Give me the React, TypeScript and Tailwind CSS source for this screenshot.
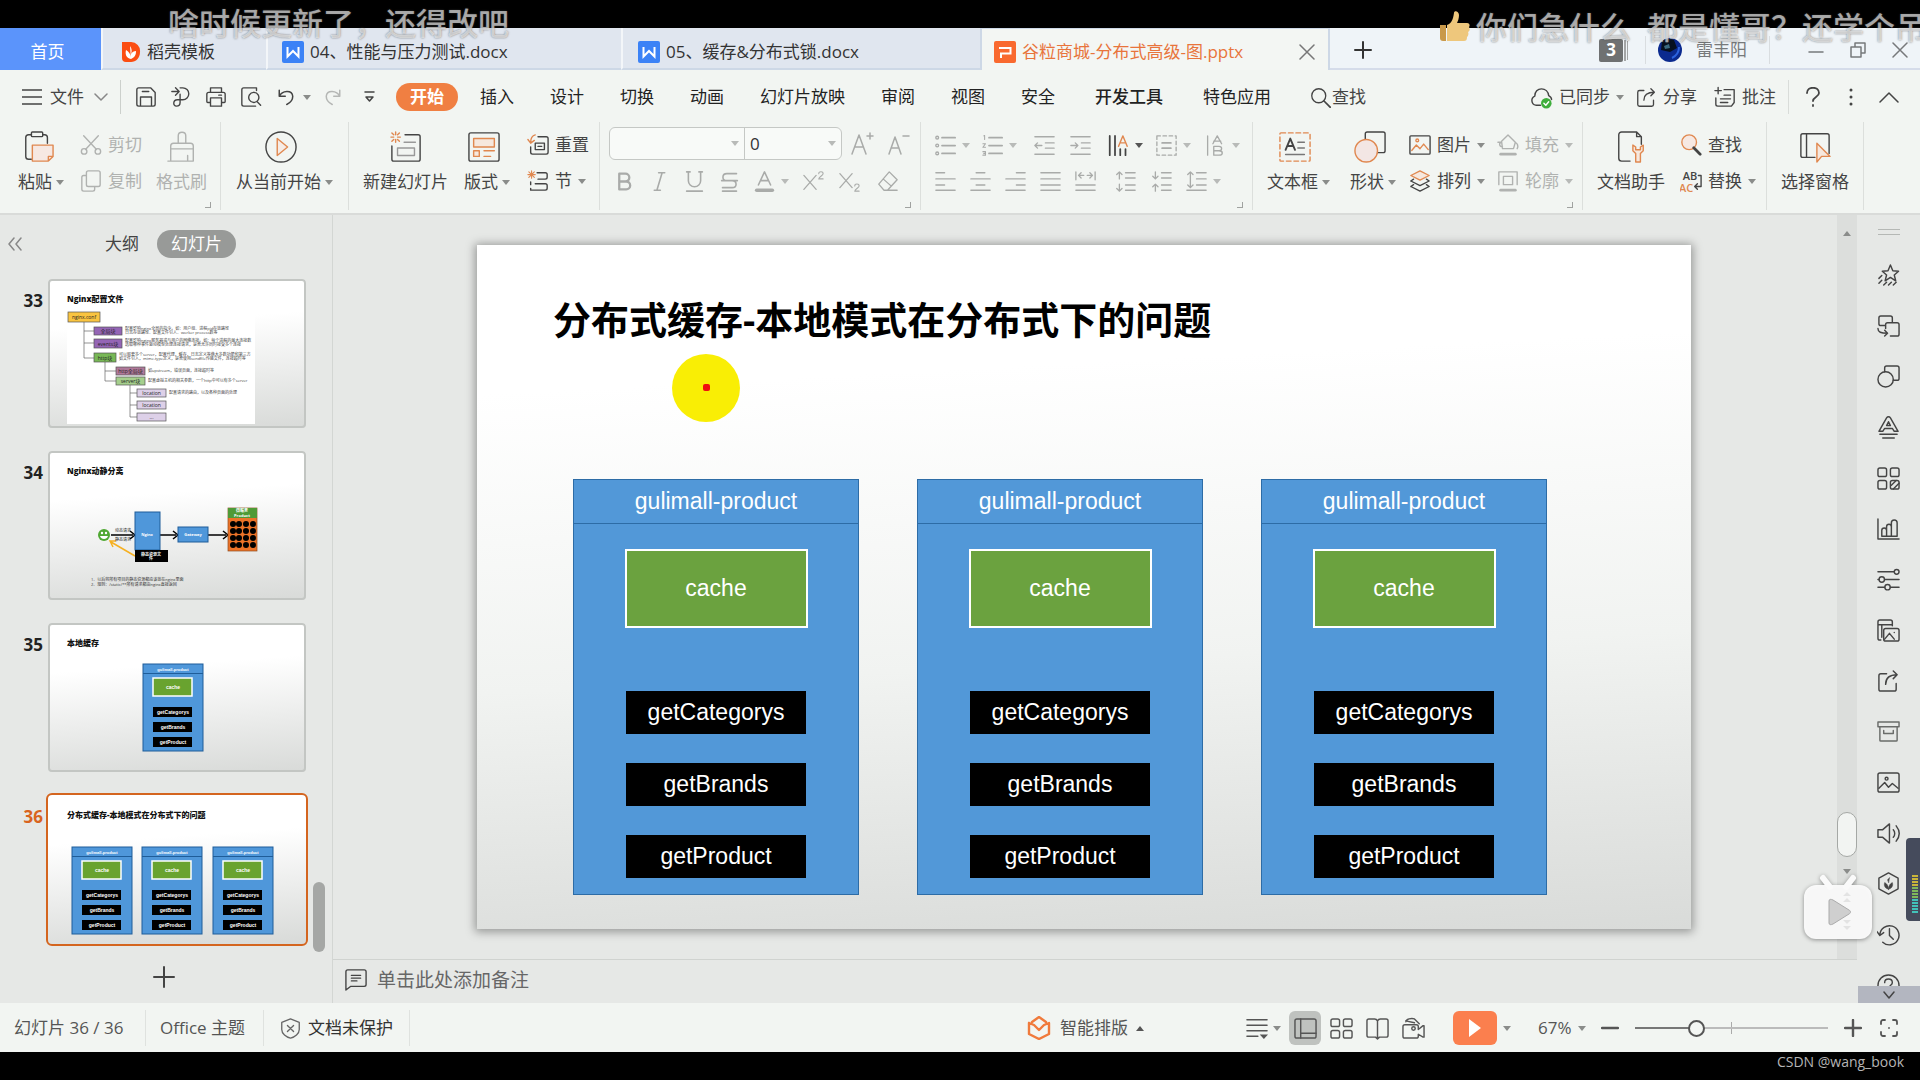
import type { ReactNode } from 'react';
import clsx from 'clsx';

type IconProps = { children: ReactNode; className?: string; box?: string };

function Icon({ children, className = 'size-6', box = '0 0 24 24' }: IconProps) {
  return (
    <svg
      viewBox={box}
      className={clsx('shrink-0', className)}
      fill="none"
      stroke="currentColor"
      strokeWidth="1.5"
      strokeLinecap="round"
      strokeLinejoin="round"
      aria-hidden="true"
    >
      {children}
    </svg>
  );
}

function Caret({ className = 'text-[#8a8c8a]', up = false }: { className?: string; up?: boolean }) {
  return (
    <svg viewBox="0 0 8 5" className={clsx('h-[5px] w-2 shrink-0', className)} aria-hidden="true">
      <path d={up ? 'M0 5h8L4 0z' : 'M0 0h8L4 5z'} fill="currentColor" />
    </svg>
  );
}

const ORANGE = '#e08850';

/* ---------- title bar ---------- */

function DocIcon({ letter }: { letter: 'W' | 'P' }) {
  return (
    <svg viewBox="0 0 22 22" className="size-[22px] shrink-0" fill="none" aria-hidden="true">
      <rect width="22" height="22" rx="2" fill={letter === 'W' ? '#3b82f6' : '#f9692f'} />
      {letter === 'W' ? (
        <path d="M5.500 6v9.500L11 10l5.500 5.500V6" stroke="#fff" strokeWidth="2" />
      ) : (
        <path d="M5 7h11.500v5.500H7V17" stroke="#fff" strokeWidth="2" />
      )}
    </svg>
  );
}

function DocTab({ children, className }: { children: ReactNode; className: string }) {
  return (
    <button
      className={clsx(
        'flex min-w-0 items-center gap-[6px] border-b-2 border-l-2 border-b-[#cdd8e6] border-l-[#f3f6f9] bg-[#e0e6ef] pt-[7px] whitespace-nowrap text-[#333]',
        className,
      )}
    >
      {children}
    </button>
  );
}

function TabBar() {
  return (
    <div className="flex h-[42px] shrink-0 bg-[#eff4f8]">
      <button className="w-[101px] bg-[#5b94fb] pt-[6px] pr-[6px] text-white">首页</button>
      <DocTab className="w-[165px] pl-[18px]">
        <svg viewBox="0 0 20 22" className="h-[22px] w-5" fill="none" aria-hidden="true">
          <path d="M1 1h9a9 9 0 0 1 9 10c0 6-4 10-9 10H5a4 4 0 0 1-4-4z" fill="#fb4d12" />
          <path d="M10 18C5 17 4 13 5 9c3 2 5 4 5 9zm0 0c4-2 5-4 5-8-2 0-4 1-5 3 1-3 1-5-1-8" fill="#fff" />
        </svg>
        稻壳模板
      </DocTab>
      <DocTab className="w-[355px] pl-[14px]">
        <DocIcon letter="W" />
        04、性能与压力测试.docx
      </DocTab>
      <DocTab className="w-[359px] pl-[15px]">
        <DocIcon letter="W" />
        05、缓存&amp;分布式锁.docx
      </DocTab>
      <div className="flex w-[350px] items-center border-x-2 border-t border-[#cdd8e6] bg-[#f3f6f3] pt-[4px] pl-3 text-[#e8743b]">
        <button className="flex flex-1 items-center gap-[6px] whitespace-nowrap">
          <DocIcon letter="P" />
          谷粒商城-分布式高级-图.pptx
        </button>
        <button aria-label="关闭标签" className="mr-[13px] text-[#777]">
          <Icon className="size-4" box="0 0 16 16">
            <path d="M1 1l14 14M15 1L1 15" />
          </Icon>
        </button>
      </div>
      <div className="flex flex-1 items-center border-b-2 border-[#d5dcea] pt-1">
        <button aria-label="新建" className="ml-6 text-[#333]">
          <Icon className="size-[18px]" box="0 0 18 18">
            <path d="M9 1v16M1 9h16" strokeWidth="2" />
          </Icon>
        </button>
        <span className="ml-auto flex items-center">
          <span className="flex h-[23px] w-6 items-center justify-center rounded-xs bg-[#6f7172] font-bold text-white">3</span>
          <span className="ml-px h-[21px] w-[2px] bg-[#a3a5a6]" />
          <span className="ml-px h-[19px] w-px bg-[#a3a5a6]" />
        </span>
        <span className="ml-[17px] h-7 w-px bg-[#d9dde0]" />
        <button className="ml-3 flex items-center gap-[14px] text-[#77797b]">
          <svg viewBox="0 0 24 24" className="size-6" aria-hidden="true">
            <circle cx="12" cy="12" r="12" fill="#0b2a8f" />
            <path d="M4 3a12 12 0 0 1 12-1l3 8-7 4-9-2z" fill="#06101f" />
            <path d="M6 8l5-2 1 4-5 1z" fill="#3a6a80" />
            <path d="M14 20c4-2 7-6 7-11" stroke="#2b62dd" strokeWidth="2" fill="none" />
          </svg>
          雷丰阳
        </button>
        <span className="ml-[22px] h-7 w-px bg-[#d9dde0]" />
        <div className="mr-3 ml-[38px] flex gap-[26px] text-[#77797b]">
          {[
            ['最小化', 'M1 10h14'],
            ['还原', 'M1 5h10v10H1zM5 5V1h10v10h-4'],
            ['关闭', 'M1 1l14 14M15 1L1 15'],
          ].map(([label, d]) => (
            <button key={label} aria-label={label}>
              <Icon className="size-4" box="0 0 16 16">
                <path d={d} />
              </Icon>
            </button>
          ))}
        </div>
      </div>
    </div>
  );
}

/* ---------- menu row ---------- */

const quickIcons: { label: string; art: ReactNode }[] = [
  { label: '保存', art: <path d="M2 4a2 2 0 0 1 2-2h13l5 5v13a2 2 0 0 1-2 2H4a2 2 0 0 1-2-2zM6 22V12h12v10M8 6h7" /> },
  { label: '输出', art: <path d="M2 6h7M6 2l4 4-4 4M11 2h3a6.500 6.500 0 0 1 0 13H8c-5 0-5 7-1 7 3 0 4-2 4-4V9" /> },
  { label: '打印', art: <path d="M6 7V2h12v5M6 18H3a1 1 0 0 1-1-1V9a2 2 0 0 1 2-2h16a2 2 0 0 1 2 2v8a1 1 0 0 1-1 1h-3M6 13h12v9H6zM15 10h3" /> },
  { label: '打印预览', art: <path d="M9 22H4a2 2 0 0 1-2-2V4a2 2 0 0 1 2-2h14v3M15 7a5.500 5.500 0 1 0 .1 0M18.500 17l4 4M9 22h8" /> },
];

const menus = ['插入', '设计', '切换', '动画', '幻灯片放映', '审阅', '视图', '安全', '开发工具', '特色应用'];

function MenuRow() {
  return (
    <div className="flex h-[52px] shrink-0 items-center pt-[2px] pl-[22px] whitespace-nowrap">
      <button className="flex items-center gap-2">
        <Icon className="h-[18px] w-5" box="0 0 20 18">
          <path d="M0 2h20M0 9h20M0 16h20" />
        </Icon>
        文件
        <Icon className="ml-[2px] h-2 w-[14px] text-[#888]" box="0 0 14 8">
          <path d="M1 1l6 6 6-6" />
        </Icon>
      </button>
      <span className="ml-3 h-[34px] w-px bg-[#ccd0cc]" />
      <div className="ml-[14px] flex items-center gap-[13px]">
        {quickIcons.map(({ label, art }) => (
          <button key={label} aria-label={label}>
            <Icon className="size-[22px]">{art}</Icon>
          </button>
        ))}
        <button aria-label="撤销" className="ml-[2px] flex items-center gap-2">
          <Icon className="size-[18px]">
            <path d="M3 3v8h8M3 11C7 3 20 2 21 11c0 5-4 9-8 11" strokeWidth="2" />
          </Icon>
          <Caret />
        </button>
        <button aria-label="恢复" className="text-[#b5b7b5]">
          <Icon className="size-[18px]">
            <path d="M21 3v8h-8M21 11C17 3 4 2 3 11c0 5 4 9 8 11" strokeWidth="2" />
          </Icon>
        </button>
        <button aria-label="自定义" className="ml-[9px]">
          <Icon className="h-[12px] w-[11px]" box="0 0 11 12">
            <path d="M1 1h9M2 6l3.500 4L9 6z" />
          </Icon>
        </button>
      </div>
      <button className="ml-[21px] h-7 w-[62px] rounded-full bg-[#f07f42] font-bold text-white">开始</button>
      <nav className="ml-[22px] flex gap-9">
        {menus.map((m) => (
          <button key={m} className={clsx(m === '开发工具' && 'px-1 font-medium', 'text-[#222]')}>
            {m}
          </button>
        ))}
      </nav>
      <button className="ml-[39px] flex items-center gap-px">
        <Icon className="size-[21px]">
          <circle cx="10" cy="10" r="8" />
          <path d="M16 16l7 7" strokeWidth="2" />
        </Icon>
        查找
      </button>
      <div className="mr-[21px] ml-auto flex items-center">
        <button className="flex items-center gap-[6px]">
          <Icon className="size-[23px]">
            <path d="M11 20H6a5 5 0 0 1-1-9.500C5 6 8 3 12 3s7 3 7.500 7c2 1 3 2 3 4" />
            <circle cx="17" cy="18" r="5.500" fill="#3fae3c" stroke="none" />
            <path d="M14.500 18l2 2 3-3.500" stroke="#fff" />
          </Icon>
          已同步
          <Caret />
        </button>
        <button className="ml-3 flex items-center gap-[6px]">
          <Icon className="size-[21px]">
            <path d="M9 4H4a2 2 0 0 0-2 2v14a2 2 0 0 0 2 2h14a2 2 0 0 0 2-2v-5M9 15c0-6 3-9 12-9M17 2l4 4-4 4" />
          </Icon>
          分享
        </button>
        <button className="ml-[17px] flex items-center gap-[6px]">
          <Icon className="size-[22px]">
            <path d="M11 4h11v14l-3 4H4a2 2 0 0 1-2-2v-7M1 5h7M4.500 1.500v7M11 10h7M7 14h11M7 18h8" />
          </Icon>
          批注
        </button>
        <span className="ml-3 h-[34px] w-px bg-[#d9dcd9]" />
        <div className="ml-[17px] flex items-center gap-[24px]">
          <button aria-label="帮助" className="mr-[3px]">
            <Icon className="h-5 w-[14px]" box="0 0 14 20">
              <path d="M1 6c0-7 12-7 12 0 0 4-6 4-6 8M7 18v1" strokeWidth="1.800" />
            </Icon>
          </button>
          <button aria-label="更多">
            <Icon className="h-[18px] w-2" box="0 0 8 18">
              <path d="M4 2v.1M4 9v.1M4 16v.1" strokeWidth="3" />
            </Icon>
          </button>
          <button aria-label="收起功能区">
            <Icon className="h-3 w-5" box="0 0 20 12">
              <path d="M1 11l9-9 9 9" />
            </Icon>
          </button>
        </div>
      </div>
    </div>
  );
}

/* ---------- ribbon ---------- */

function Group({ children, className, corner = false }: { children: ReactNode; className?: string; corner?: boolean }) {
  return (
    <div className={clsx('relative flex h-[88px] shrink-0 items-start border-r border-[#dcdfdc]', className)}>
      {children}
      {corner && <span className="absolute right-[9px] bottom-[2px] size-[6px] border-r border-b border-[#a0a2a0]" />}
    </div>
  );
}

function BigButton({ icon, label, caret = false, muted = false, className }: { icon: ReactNode; label: string; caret?: boolean; muted?: boolean; className?: string }) {
  return (
    <button className={clsx('mt-[9px] flex flex-col items-center gap-[6px]', muted && 'text-[#b0b2b0]', className)}>
      <Icon className={clsx('size-8', caret && 'mr-[7px]')} box="0 0 34 34">
        {icon}
      </Icon>
      <span className="flex h-[26px] items-center gap-1 whitespace-nowrap">
        {label}
        {caret && <Caret />}
      </span>
    </button>
  );
}

function SmallButton({ icon, label, caret = false, muted = false }: { icon: ReactNode; label: string; caret?: boolean; muted?: boolean }) {
  return (
    <button className={clsx('flex h-[26px] items-center gap-[6px] whitespace-nowrap', muted && 'text-[#b0b2b0]')}>
      <Icon className="size-[22px]">{icon}</Icon>
      {label}
      {caret && <Caret className={muted ? 'text-[#b8bab8]' : 'text-[#8a8c8a]'} />}
    </button>
  );
}

function Stack({ children, className }: { children: ReactNode; className?: string }) {
  return <div className={clsx('mt-[10px] flex flex-col gap-[10px]', className)}>{children}</div>;
}

// every tool carries its own width: those with a caret take more room
type Tool = { label: string; art: ReactNode; caret?: boolean; width: string; dark?: boolean };

function ToolRow({ tools }: { tools: Tool[] }) {
  return (
    <div className="flex h-[26px] text-[#a9aba9]">
      {tools.map(({ label, art, caret, width, dark }) => (
        <button key={label} aria-label={label} className={clsx('flex items-center gap-[6px]', width, dark && 'text-[#444]')}>
          <Icon className="size-[21px]">{art}</Icon>
          {caret && <Caret className={dark ? 'text-[#555]' : 'text-[#b8bab8]'} />}
        </button>
      ))}
    </div>
  );
}

const glyph = { fill: 'currentColor', stroke: 'none' };

const fontTools: Tool[] = [
  { label: '加粗', width: 'w-[35px]', art: <path d="M6 3h7a4.500 4.500 0 0 1 0 9H6zM6 12h8a4.500 4.500 0 0 1 0 9H6z" strokeWidth="2.600" /> },
  { label: '倾斜', width: 'w-[35px]', art: <path d="M11 2h7M6 22h7M15 2L9 22" strokeWidth="1.800" /> },
  { label: '下划线', width: 'w-[35px]', art: <path d="M5 1v10a7 7 0 0 0 14 0V1M3 23h18M3 1h4M17 1h4" strokeWidth="1.800" /> },
  { label: '删除线', width: 'w-[35px]', art: <path d="M20 3H9c-6 0-6 8 0 8h6c6 0 6 8 0 8H4M3 11h18M4 23h16" strokeWidth="1.800" /> },
  { label: '字体颜色', width: 'w-[49px]', caret: true, art: <><path d="M5 16l7-15 7 15M8 11h8" strokeWidth="1.800" /><path d="M3 22h18" strokeWidth="4" /></> },
  { label: '上标', width: 'w-[36px]', art: <><path d="M1 5l14 16M15 5L1 21" /><path d="M18 3c0-3 5-3 5 0 0 2-5 4-5 6h5" strokeWidth="1.200" /></> },
  { label: '下标', width: 'w-[38px]', art: <><path d="M1 3l14 16M15 3L1 19" /><path d="M18 17c0-3 5-3 5 0 0 2-5 4-5 6h5" strokeWidth="1.200" /></> },
  { label: '清除格式', width: 'w-6', art: <path d="M14 1l9 9-11 12H8l-6-7zM7 9l9 8M8 22h15" /> },
];

const listTools: Tool[] = [
  { label: '项目符号', width: 'w-[47px]', caret: true, art: <><path d="M8 3h15M8 12h15M8 21h15" strokeWidth="2" /><circle cx="2.500" cy="3" r="1.600" /><circle cx="2.500" cy="12" r="1.600" /><circle cx="2.500" cy="21" r="1.600" /></> },
  { label: '编号', width: 'w-[52px]', caret: true, art: <><path d="M8 3h15M8 12h15M8 21h15" strokeWidth="2" /><path d="M2 1l1-.5V5M1 10h3l-3 4h3M1 19h3v4H1M2 21h2" strokeWidth="1.200" /></> },
  { label: '减少缩进', width: 'w-9', art: <path d="M1 2h22M13 9h10M13 15h10M1 22h22M9 12H1M4 9l-3 3 3 3" /> },
  { label: '增加缩进', width: 'w-[38px]', art: <path d="M1 2h22M13 9h10M13 15h10M1 22h22M1 12h8M6 9l3 3-3 3" /> },
  { label: '文字方向', width: 'w-12', caret: true, dark: true, art: <><path d="M2 1v22M8 1v22M14 16v7M20 16v7" strokeWidth="2" /><path d="M12 13l5-12 5 12M14 9h6" stroke={ORANGE} /></> },
  { label: '对齐文本', width: 'w-[49px]', caret: true, art: <><rect x="1" y="1" width="22" height="22" strokeDasharray="4 3" /><path d="M7 9h10M7 15h10" strokeWidth="2" /></> },
  { label: '转换', width: 'w-10', caret: true, art: <path d="M3 1v22M9 10l5-9 5 9M10 7h8M10 13h6c4 0 4 5 0 5h-6zM10 18h6c5 0 5 5 0 5h-6z" /> },
];

const alignTools: Tool[] = [
  { label: '左对齐', width: 'w-[35px]', art: <path d="M1 2h10M1 9h22M1 16h10M1 22h22" /> },
  { label: '居中', width: 'w-[35px]', art: <path d="M7 2h10M1 9h22M7 16h10M1 22h22" /> },
  { label: '右对齐', width: 'w-[35px]', art: <path d="M13 2h10M1 9h22M13 16h10M1 22h22" /> },
  { label: '两端对齐', width: 'w-[35px]', art: <path d="M1 2h22M1 9h22M1 16h22M1 22h22" /> },
  { label: '分散对齐', width: 'w-10', art: <path d="M1 1v9M23 1v9M4 5h6M14 5h6M7 2L4 5l3 3M17 2l3 3-3 3M1 16h22M1 22h22" /> },
  { label: '增大段距', width: 'w-9', art: <path d="M12 2h11M12 8h11M12 16h11M12 22h11M5 9V1M2 4l3-3 3 3M5 15v8M2 20l3 3 3-3" /> },
  { label: '减小段距', width: 'w-[35px]', art: <path d="M12 2h11M12 8h11M12 16h11M12 22h11M5 1v8M2 6l3 3 3-3M5 23v-8M2 18l3-3 3 3" /> },
  { label: '行距', width: 'w-10', caret: true, art: <path d="M12 2h11M12 9h11M12 16h11M1 22h22M5 1v18M2 4l3-3 3 3M2 16l3 3 3-3" /> },
];

function Ribbon() {
  return (
    <div className="flex h-[93px] shrink-0 border-b-2 border-[#d9dbd9]">
      <Group className="w-[221px] pl-[18px]" corner>
        <BigButton
          caret
          label="粘贴"
          icon={
            <>
              <path d="M10 4H7a3 3 0 0 0-3 3v20a3 3 0 0 0 3 3h3M22 4h2a3 3 0 0 1 3 3v6" />
              <rect x="10" y="1" width="12" height="5" rx="1" />
              <path d="M11 15h22v12l-5 5H11zM28 32v-5h5" stroke={ORANGE} fill="#f6e8e2" />
            </>
          }
        />
        <Stack className="ml-4">
          <SmallButton muted label="剪切" icon={<><path d="M4 2l14 15M20 2L6 17" /><circle cx="4.500" cy="19" r="3" /><circle cx="19.500" cy="19" r="3" /></>} />
          <SmallButton muted label="复制" icon={<path d="M9 1h11a2 2 0 0 1 2 2v13a2 2 0 0 1-2 2H9a2 2 0 0 1-2-2V3a2 2 0 0 1 2-2zM7 6H4a2 2 0 0 0-2 2v13a2 2 0 0 0 2 2h10a2 2 0 0 0 2-2v-3" />} />
        </Stack>
        <BigButton
          muted
          label="格式刷"
          className="ml-[14px]"
          icon={<path d="M13 13V5c0-5 8-5 8 0v8M5 19v-3a3 3 0 0 1 3-3h18a3 3 0 0 1 3 3v3zM5 19v13h24V19M23 26v6M2 32h3" />}
        />
      </Group>
      <Group className="w-[128px] pl-[15px]">
        <BigButton
          caret
          label="从当前开始"
          icon={
            <>
              <circle cx="17" cy="17" r="16" />
              <path d="M13 8v18l11-9z" stroke={ORANGE} fill="#f6ece6" />
            </>
          }
        />
      </Group>
      <Group className="w-[251px] pl-[14px]">
        <BigButton
          label="新建幻灯片"
          icon={
            <>
              <path d="M16 4h14a2 2 0 0 1 2 2v24a2 2 0 0 1-2 2H4a2 2 0 0 1-2-2V16" />
              <path d="M15 12h12M8 18h18v8H8z" stroke="#999" />
              <path d="M6 1v3M6 9v3M1 6.500h3M8 6.500h3M2 2l2 2M8 9l2 2M10 2L8 4M4 9l-2 2" stroke={ORANGE} />
            </>
          }
        />
        <BigButton
          caret
          label="版式"
          className="ml-4"
          icon={
            <>
              <rect x="1" y="2" width="32" height="30" rx="2" />
              <path d="M6 8h22v9H6zM6 21h6v6H6zM17 21h11M17 27h7" stroke={ORANGE} fill="#f6e8de" />
            </>
          }
        />
        <Stack className="ml-[17px]">
          <SmallButton label="重置" icon={<><path d="M12 3h9a2 2 0 0 1 2 2v15a2 2 0 0 1-2 2H6a2 2 0 0 1-2-2v-6M9 10h10v7H9zM12 13.500h4" /><path d="M9 1C5 2 4 5 4 9M1 6l3 4 4-3" stroke={ORANGE} /></>} />
          <SmallButton caret label="节" icon={<><path d="M11 3h9a2 2 0 0 1 2 2v3a2 2 0 0 1-2 2h-8M4 13v3M4 20v2h16a2 2 0 0 0 2-2v-3a2 2 0 0 0-2-2H9" /><path d="M5 1v8M1 5h8M2 2l6 6M8 2L2 8" stroke={ORANGE} strokeWidth="1.200" /></>} />
        </Stack>
      </Group>
      <Group className="w-[321px] pl-[9px]" corner>
        <div className="mt-[5px] flex flex-col gap-[8px]">
          <div className="flex items-center text-[#a9aba9]">
            <div className="flex h-[33px] overflow-hidden rounded-md border border-[#c5c8c5] bg-[#f8faf8]">
              <div className="relative w-[135px] border-r border-[#c5c8c5]">
                <select aria-label="字体" className="size-full appearance-none" />
                <span className="pointer-events-none absolute top-[13px] right-[5px] flex"><Caret className="text-[#b8bab8]" /></span>
              </div>
              <div className="relative w-24 text-[#333]">
                <select aria-label="字号" className="size-full appearance-none pl-[5px]">
                  <option>0</option>
                </select>
                <span className="pointer-events-none absolute top-[13px] right-[5px] flex"><Caret className="text-[#b8bab8]" /></span>
              </div>
            </div>
            <button aria-label="增大字号" className="ml-[8px]">
              <Icon className="size-6"><path d="M2 22L9 3l7 19M5 15h8M17 4h6M20 1v6" /></Icon>
            </button>
            <button aria-label="减小字号" className="ml-3">
              <Icon className="size-6"><path d="M3 22L9 5l6 17M5 16h8M17 4h6" /></Icon>
            </button>
          </div>
          <div className="ml-[5px]">
            <ToolRow tools={fontTools} />
          </div>
        </div>
      </Group>
      <Group className="w-[332px] pl-[14px]" corner>
        <Stack>
          <ToolRow tools={listTools} />
          <ToolRow tools={alignTools} />
        </Stack>
      </Group>
      <Group className="w-[330px] pl-[14px]" corner>
        <BigButton
          caret
          label="文本框"
          icon={
            <>
              <rect x="1" y="2" width="32" height="30" rx="1" stroke={ORANGE} strokeDasharray="5 3" />
              <path d="M7 20l5-12 5 12M9 16h6" strokeWidth="2" />
              <path d="M20 12h7M20 18h7M7 25h20" stroke="#777" />
            </>
          }
        />
        <BigButton
          caret
          label="形状"
          className="ml-5"
          icon={
            <>
              <rect x="12" y="1" width="21" height="22" rx="2" />
              <circle cx="13" cy="21" r="12" stroke={ORANGE} fill="#f3e6e4" />
            </>
          }
        />
        <Stack className="ml-[13px]">
          <SmallButton caret label="图片" icon={<><rect x="1" y="2" width="22" height="20" rx="1" /><path d="M3 18l5-6 4 4 4-5 5 6" stroke={ORANGE} /><circle cx="9" cy="7" r="1.500" stroke={ORANGE} /></>} />
          <SmallButton caret label="排列" icon={<><path d="M12 1l10 5-10 5L2 6z" stroke={ORANGE} fill="#f6e8de" /><path d="M2 12l10 5 10-5-3-2M2 12l3-2M2 18l10 5 10-5-3-2M2 18l3-2" /></>} />
        </Stack>
        <Stack className="ml-3">
          <SmallButton muted caret label="填充" icon={<><path d="M5 8l7-7 8 8-2 7H6zM1 9h4c-3 0-3 5 1 5M20 9c3 2 3 5 2 7" /><path d="M4 22h16" strokeWidth="3" /></>} />
          <SmallButton muted caret label="轮廓" icon={<><path d="M2 16V2h20v14M7 16V7h10v9z" /><path d="M4 22h16" strokeWidth="3" /></>} />
        </Stack>
      </Group>
      <Group className="w-[184px] pl-[14px]">
        <BigButton
          label="文档助手"
          icon={
            <>
              <path d="M16 32H7a3 3 0 0 1-3-3V4a3 3 0 0 1 3-3h16l5 5v8M23 1v5h5" />
              <path d="M19 15v6l3 3v9h5v-9l3-3v-6l-3 2v3h-5v-3z" stroke={ORANGE} fill="#f6e8de" />
            </>
          }
        />
        <Stack className="ml-[15px]">
          <SmallButton label="查找" icon={<><circle cx="10" cy="9" r="8" stroke={ORANGE} fill="#f6e8e2" /><path d="M15 15l7 7" strokeWidth="3" /></>} />
          <SmallButton
            caret
            label="替换"
            icon={
              <>
                <text x="3" y="11" fontSize="12" fontWeight="600" {...glyph}>AB</text>
                <text x="-1" y="24" fontSize="12" fontWeight="600" fill={ORANGE} stroke="none">AC</text>
                <path d="M20 6h3v12h-6M19 15l-3 3 3 3" />
              </>
            }
          />
        </Stack>
      </Group>
      <Group className="w-[97px] pl-[14px]">
        <BigButton
          label="选择窗格"
          icon={
            <>
              <path d="M17 28H4a2 2 0 0 1-2-2V5a2 2 0 0 1 2-2h26a2 2 0 0 1 2 2v19M8 3v25" />
              <path d="M19 13v20l5-6h9z" stroke={ORANGE} fill="#f6e8de" />
            </>
          }
        />
      </Group>
    </div>
  );
}

/* ---------- slide thumbnails ---------- */

const methods = ['getCategorys', 'getBrands', 'getProduct'];

function MiniService({ x, y }: { x: number; y: number }) {
  return (
    <g transform={`translate(${x} ${y})`} fill="#fff" fontSize="5" fontFamily="Liberation Sans" fontWeight="bold" textAnchor="middle">
      <rect width="60" height="87" fill="#4f97da" stroke="#1f5d99" />
      <path d="M0 9.500h60" stroke="#1f5d99" />
      <text x="30" y="7" fontSize="4">gulimall-product</text>
      <rect x="10" y="14" width="39" height="18" fill="#69a32f" stroke="#fff" strokeWidth="1.500" />
      <text x="30" y="25">cache</text>
      {methods.map((m, i) => (
        <g key={m}>
          <rect x="10" y={43 + i * 15} width="39" height="10" fill="#000" />
          <text x="30" y={50 + i * 15}>{m}</text>
        </g>
      ))}
    </g>
  );
}

const confNodes = [
  { x: 20, y: 33, w: 32, h: 10, fill: '#f9c440', text: 'nginx.conf' },
  { x: 46, y: 48, w: 28, h: 8, fill: '#9465b5', text: '全局块', note: ['配置影响nginx全局的指令。如：用户组、进程pid存放路径', '日志存放路径、配置文件引入、worker process数等'] },
  { x: 46, y: 60, w: 28, h: 9, fill: '#9465b5', text: 'events块', note: ['配置影响nginx服务器或与用户的网络连接。如：每个进程的最大连接数', '选取哪种事件驱动模型处理连接请求，是否允许同时接受多个连接'] },
  { x: 46, y: 74, w: 22, h: 9, fill: '#78b856', text: 'http块', note: ['可以嵌套多个server，配置代理，缓存，日志定义等绝大多数功能和第三方', '如文件引入，mime-type定义，是否使用sendfile传输文件，连接超时等'] },
  { x: 68, y: 88, w: 29, h: 8, fill: '#b0799a', text: 'http全局块', note: ['如upstream，错误页面，连接超时等'] },
  { x: 68, y: 98, w: 29, h: 8, fill: '#a5cf8c', text: 'server块', note: ['配置虚拟主机的相关参数，一个http中可以有多个server'] },
  { x: 89, y: 110, w: 29, h: 8, fill: '#ddd0e8', text: 'location', note: ['配置请求的路由，以及各种页面的处理'] },
  { x: 89, y: 122, w: 29, h: 8, fill: '#ddd0e8', text: 'location' },
  { x: 89, y: 134, w: 29, h: 8, fill: '#ddd0e8', text: '...' },
];

function NginxConf() {
  return (
    <>
      <rect x="19" y="26" width="188" height="119" fill="#fff" />
      <path d="M36 43v36h10M36 52h10M36 64h10M57 83v19h11M57 92h11M82 106v32h7M82 114h7M82 126h7" stroke="#666" fill="none" strokeWidth=".7" />
      {confNodes.map((n) => (
        <g key={n.y} fontSize="5">
          <rect x={n.x} y={n.y} width={n.w} height={n.h} fill={n.fill} stroke="#555" strokeWidth=".7" />
          <text x={n.x + n.w / 2} y={n.y + n.h / 2 + 2} textAnchor="middle" fill="#222">{n.text}</text>
          {n.note?.map((line, i) => (
            <text key={line} x={n.x + n.w + 3} y={n.y + 5 - (n.note.length - 1) * 2 + i * 4} fontSize="4" fill="#444">{line}</text>
          ))}
        </g>
      ))}
    </>
  );
}

function StaticSplit() {
  return (
    <>
      <circle cx="56" cy="84" r="6" fill="#4fa832" />
      <circle cx="54" cy="82" r="1.200" fill="#fff" />
      <circle cx="58" cy="82" r="1.200" fill="#fff" />
      <path d="M52 85c1 4 7 4 8 0z" fill="#fff" />
      <path d="M63 84h22M112 84h16M160 84h18" stroke="#000" strokeWidth="1.500" />
      <path d="M82 80l5 4-5 4M125 80l5 4-5 4M175 80l5 4-5 4" stroke="#000" fill="none" strokeWidth="1.500" />
      <path d="M87 105L63 91M68 90l-6 0 3 6" stroke="#f5b022" fill="none" strokeWidth="1.500" />
      <rect x="87" y="61" width="25" height="38" fill="#4f97da" stroke="#1f5d99" />
      <rect x="87" y="99" width="33" height="12" fill="#000" />
      <rect x="130" y="76" width="30" height="15" fill="#4f97da" stroke="#1f5d99" />
      <rect x="180" y="57" width="29" height="43" fill="#ec7328" stroke="#8f4a1d" strokeWidth=".7" />
      <rect x="180" y="57" width="29" height="10" fill="#4f9a36" />
      {[73, 80, 87, 94].map((y) => [185, 191, 198, 205].map((x) => <circle key={`${x}-${y}`} cx={x} cy={y} r="3" fill="#000" />))}
      <g fontSize="4" textAnchor="middle" fill="#fff" fontWeight="bold">
        <text x="99" y="85">Nginx</text>
        <text x="145" y="85">Gateway</text>
        <text x="103" y="105">静态资源文</text>
        <text x="103" y="109">件</text>
        <text x="194" y="61">微服务</text>
        <text x="194" y="66">Product</text>
        <text x="75" y="81" fill="#222" fontWeight="normal">动态请求</text>
        <text x="75" y="90" fill="#222" fontWeight="normal">静态请求</text>
      </g>
      <g fontSize="4" fill="#333">
        <text x="43" y="130">1、以后将所有项目的静态资源都应该放在nginx里面</text>
        <text x="43" y="135">2、规则：/static/**所有请求都由nginx直接返回</text>
      </g>
    </>
  );
}

const thumbs = [
  { no: 33, title: 'Nginx配置文件', art: <NginxConf /> },
  { no: 34, title: 'Nginx动静分离', art: <StaticSplit /> },
  { no: 35, title: '本地缓存', art: <MiniService x={95} y={41} /> },
  {
    no: 36,
    title: '分布式缓存-本地模式在分布式下的问题',
    art: (
      <>
        <MiniService x={24} y={52} />
        <MiniService x={94} y={52} />
        <MiniService x={165} y={52} />
      </>
    ),
    active: true,
  },
];

function SlidePane() {
  return (
    <aside className="relative w-[333px] shrink-0 border-r border-[#d3d6d3]">
      <div className="flex h-[58px] items-center pl-2">
        <button aria-label="收起" className="text-[#888]">
          <Icon className="size-[14px]" box="0 0 14 14"><path d="M6 1L1 7l5 6M13 1L8 7l5 6" /></Icon>
        </button>
        <button className="ml-[83px]">大纲</button>
        <button className="ml-[18px] h-7 w-[79px] rounded-full bg-[#989a98] text-white">幻灯片</button>
      </div>
      <ol className="mt-[6px] flex flex-col gap-[23px]">
        {thumbs.map((t) => (
          <li key={t.no} className="flex">
            <span className={clsx('w-[43px] pt-[10px] text-right font-bold', t.active ? 'text-[#d9641e]' : 'text-[#222]')}>{t.no}</span>
            <button
              aria-label={`幻灯片 ${t.no}`}
              className={clsx(
                'ml-[5px] h-[149px] w-[258px] rounded-sm bg-linear-[176deg] from-white from-30% to-[#d8dad8] outline-2',
                t.active ? 'outline-[#d4651f]' : '-outline-offset-2 outline-[#c3c6c3]',
              )}
            >
              <svg viewBox="0 0 258 149" className="size-full">
                <text x="19" y="23" fontSize="8" fontWeight="900" fill="#111">{t.title}</text>
                {t.art}
              </svg>
            </button>
          </li>
        ))}
      </ol>
      <button aria-label="新建幻灯片" className="mt-[22px] ml-[153px] block">
        <Icon className="size-[22px]" box="0 0 22 22"><path d="M11 1v20M1 11h20" strokeWidth="2" /></Icon>
      </button>
      <span className="absolute right-[7px] bottom-[51px] h-[70px] w-3 rounded-full bg-[#a5a7a5]" />
    </aside>
  );
}

/* ---------- slide ---------- */

function Service() {
  return (
    <div className="flex flex-col items-center border border-[#2d6ca6] bg-[#5298d8] pb-4">
      <div className="flex h-11 w-full items-center justify-center border-b border-[#2d6ca6]">gulimall-product</div>
      <div className="mt-[25px] flex h-[79px] w-[183px] items-center justify-center border-2 border-white bg-[#6ba23f]">cache</div>
      <div className="mt-[63px] flex flex-col gap-[29px]">
        {methods.map((m) => (
          <div key={m} className="flex h-[43px] w-[180px] items-center justify-center bg-black">{m}</div>
        ))}
      </div>
    </div>
  );
}

function Slide() {
  return (
    <div className="relative mr-[146px] ml-36 aspect-[1215/685] flex-1 bg-linear-[177deg] from-white from-20% via-[#f1f3f1] via-60% to-[#d9dbd9] shadow-[0_1px_9px_2px_rgba(0,0,0,0.35)]">
      <h1 className="pt-[54px] pl-[76px] text-[38px] leading-10 font-bold text-black">分布式缓存-本地模式在分布式下的问题</h1>
      <div className="mt-[140px] mr-36 ml-24 grid grid-cols-3 gap-[58px] font-['Liberation_Sans',sans-serif] text-[23px] text-white">
        <Service />
        <Service />
        <Service />
      </div>
      {/* laser pointer */}
      <span className="absolute top-[109px] left-[195px] flex size-[68px] items-center justify-center rounded-full bg-[#f9ee05]">
        <span className="size-[7px] rounded-xs bg-[#f01010]" />
      </span>
    </div>
  );
}

/* ---------- right side ---------- */

const sideIcons: { label: string; art: ReactNode }[] = [
  { label: '动画', art: <path d="M14 1l2.500 6 6 .5-4.500 4 1.500 6L14 14l-5.500 3.500 1.500-6-4.500-4 6-.5zM5 12l-3 3M5 17l-3 3M10 19l-3 3M15 19l-3 3M20 19l-3 3" /> },
  { label: '切换', art: <path d="M9 11H4a2 2 0 0 1-2-2V3a2 2 0 0 1 2-2h10a2 2 0 0 1 2 2v4M11 8h10a2 2 0 0 1 2 2v10a2 2 0 0 1-2 2h-7M9 14v-4a2 2 0 0 1 2-2M1 14c0 4 3 5 10 5M8 16l3 3-3 3" /> },
  { label: '形状', art: <><path d="M8 7V3a2 2 0 0 1 2-2h11a2 2 0 0 1 2 2v11a2 2 0 0 1-2 2h-4" /><circle cx="9" cy="15" r="8" /></> },
  { label: '艺术字', art: <path d="M2 16L10 2c1-1.500 3-1.500 4 0l8 14h-4l-2-3H8l-2 3zM10 10l2-4 2 4zM3 19h18M6 23h12" /> },
  { label: '模板', art: <><rect x="1" y="1" width="9" height="9" rx="2" /><rect x="14" y="1" width="9" height="9" rx="2" /><rect x="1" y="14" width="9" height="9" rx="2" /><rect x="14" y="14" width="9" height="9" rx="2" /><path d="M15 19l5-5M17 23l6-6" /></> },
  { label: '图表', art: <path d="M1 1v21h22M5 19v-6a2 2 0 0 1 5 0v6M10 19V9a2 2 0 0 1 5 0v10M15 19V5a3 3 0 0 1 6 0v14zM5 19h10" /> },
  { label: '设置', art: <><path d="M1 4h17M1 12h1M8 12h15M1 20h7M14 20h9" /><circle cx="20.500" cy="4" r="2.500" /><circle cx="5" cy="12" r="2.800" /><circle cx="11" cy="20" r="2.800" /></> },
  { label: '素材', art: <><path d="M4 22H3a2 2 0 0 1-2-2V3a2 2 0 0 1 2-2h11a2 2 0 0 1 2 2v4M1 6h15M5 6v13" /><rect x="7" y="10" width="16" height="13" rx="2" /><path d="M8 21l5-6 5 6M18 14v.1" /></> },
  { label: '分享', art: <path d="M10 4H4a2 2 0 0 0-2 2v14a2 2 0 0 0 2 2h14a2 2 0 0 0 2-2v-6M9 15c0-6 3-10 12-10M17 1l4 4-4 4" /> },
  { label: '归档', art: <path d="M1 2h22v5H1zM3 7v14a1 1 0 0 0 1 1h16a1 1 0 0 0 1-1V7M7 11v3h10v-3" stroke="#6a6c6a" /> },
  { label: '图片', art: <><rect x="1" y="2" width="22" height="20" rx="2" /><path d="M2 18l6-6 4 5 4-4 6 5" /><circle cx="10" cy="8" r="1.500" /></> },
  { label: '音频', art: <path d="M1 8h5l7-6v20l-7-6H1zM17 8c2 2 2 6 0 8M20 4c4 5 4 11 0 16" /> },
  { label: '资源', art: <><path d="M12 1l10 5.500v11L12 23 2 17.500v-11z" /><path d="M12 18c-4-1-5-4-4-7 2 1 4 3 4 7zm0 0c4-1 5-4 4-7-2 1-4 3-4 7zM12 11l-1-3 2-2z" fill="currentColor" strokeWidth=".5" /></> },
  { label: '历史', art: <path d="M3 12a10 10 0 1 1 3 8M0 9l3 4 4-3M13 6v7l4 4" /> },
  { label: '帮助', art: <><circle cx="12" cy="12" r="11" /><path d="M8 9c0-5 8-5 8 0 0 3-4 3-4 6M12 18v.5" /></> },
];

function SideBar() {
  return (
    <aside className="relative flex w-[63px] shrink-0 flex-col items-center overflow-hidden pt-[14px] pb-[6px]">
      <span className="mb-[29px] h-[6px] w-[22px] shrink-0 border-y border-[#b5b8b5]" />
      <div className="flex min-h-0 flex-1 flex-col justify-between">
        {sideIcons.map(({ label, art }) => (
          <button key={label} aria-label={label}>
            <Icon className="size-[23px]">{art}</Icon>
          </button>
        ))}
      </div>
      <button aria-label="向下滚动" className="absolute right-0 bottom-0 flex h-[17px] w-[62px] items-center justify-center bg-[#b3b6c0]">
        <Icon className="h-2 w-3" box="0 0 12 8"><path d="M1 1l5 6 5-6" /></Icon>
      </button>
      {/* volume meter */}
      <span className="absolute right-0 bottom-[82px] flex h-[83px] w-[14px] items-end rounded-l bg-[#454b5c] py-2 pl-[6px]">
        <svg viewBox="0 0 6 38" className="h-[38px] w-[6px]" aria-hidden="true">
          {Array.from({ length: 13 }, (_, i) => (
            <rect key={i} y={i * 3} width="6" height="2" fill={i < 4 ? '#c9b53a' : i < 8 ? '#7fb95a' : '#42c3b9'} />
          ))}
        </svg>
      </span>
    </aside>
  );
}

function PlayBadge() {
  return (
    <svg viewBox="0 0 72 68" className="absolute right-[46px] bottom-[62px] z-10 h-[68px] w-[72px] drop-shadow-[0_1px_2px_rgba(0,0,0,0.4)]" aria-hidden="true">
      <path d="M21 5l7 9M51 5l-7 9" stroke="#fafafa" strokeWidth="6" strokeLinecap="round" />
      <rect x="2" y="12" width="68" height="54" rx="12" fill="#fafafa" fillOpacity=".97" />
      <path d="M27 28c0-2 2-2 4-1l16 10c2 1 2 3 0 4L31 51c-2 1-4 1-4-1z" fill="#cfcfcf" stroke="#aaa" />
      <path d="M41 23l4-4 4 4zM41 29l4-4 4 4zM41 47l4 4 4-4zM41 53l4 4 4-4z" fill="#e3e3e3" />
    </svg>
  );
}

function Workspace() {
  return (
    <div className="relative flex min-h-0 flex-1 bg-[#e6e8e6]">
      <SlidePane />
      <main className="flex min-w-0 flex-1 flex-col">
        <div className="flex min-h-0 flex-1">
          <div className="flex flex-1 items-center">
            <Slide />
          </div>
          <div className="flex w-5 flex-col items-center bg-[#dcdedc] pt-4">
            <Caret up />
            <span className="mt-auto h-[45px] w-5 rounded-full border border-[#a5a8a5] bg-[#f2f4f2]" />
            <span className="mt-[12px] mb-[85px] flex"><Caret /></span>
          </div>
        </div>
        <label className="flex h-11 items-center border-t border-[#d0d3d0] pb-1 pl-[11px]">
          <Icon className="h-[22px] w-6">
            <path d="M3 1h18a2 2 0 0 1 2 2v14a2 2 0 0 1-2 2H6l-5 4V3a2 2 0 0 1 2-2zM7 7h10M7 10h10M7 13h6" />
          </Icon>
          <input
            aria-label="备注"
            placeholder="单击此处添加备注"
            className="ml-[9px] w-96 bg-transparent text-[19px] outline-none placeholder:text-[#666]"
          />
        </label>
      </main>
      <SideBar />
      <PlayBadge />
    </div>
  );
}

/* ---------- status bar ---------- */

const viewIcons: { label: string; art: ReactNode }[] = [
  { label: '普通视图', art: <><rect x="1" y="2" width="22" height="20" rx="2" /><path d="M7 2v20M7 17h16" /></> },
  { label: '幻灯片浏览', art: <><rect x="1" y="2" width="9" height="8" rx="2" /><rect x="14" y="2" width="9" height="8" rx="2" /><rect x="1" y="14" width="9" height="8" rx="2" /><rect x="14" y="14" width="9" height="8" rx="2" /></> },
  { label: '阅读视图', art: <path d="M12 4c-1-2-2-2-3-2H3a2 2 0 0 0-2 2v15a2 2 0 0 0 2 2h7l2 2 2-2h7a2 2 0 0 0 2-2V4a2 2 0 0 0-2-2h-6c-1 0-2 0-3 2zM12 4v18" /> },
  { label: '演讲者备注', art: <><path d="M3 8h12a2 2 0 0 1 2 2v3l5-4h1v12h-1l-5-3v2a2 2 0 0 1-2 2H3a2 2 0 0 1-2-2V10a2 2 0 0 1 2-2zM4 5c0-3 6-4 9-3l5 5M4 4l9 2" /><circle cx="12" cy="12" r="1.800" /></> },
];

function StatusBar() {
  return (
    <footer className="flex h-[49px] shrink-0 items-center pt-px pl-[14px] whitespace-nowrap text-[#555]">
      <span className="w-[131px]">幻灯片 36 / 36</span>
      <span className="flex h-9 w-[119px] items-center border-x border-[#dfe2df] pl-[14px]">Office 主题</span>
      <button className="flex h-9 items-center gap-[7px] border-r border-[#dfe2df] px-4 text-[#333]">
        <Icon className="size-[21px] text-[#666]">
          <path d="M12 1l10 4v8c0 5-5 9-10 10C7 22 2 18 2 13V5zM8.500 8.500l7 7M15.500 8.500l-7 7" />
        </Icon>
        文档未保护
      </button>
      <button className="ml-auto flex items-center gap-[9px]">
        <Icon className="size-6">
          <path d="M2 7v11l10 5 10-5V7l-5 2-5 5-5-5-5-2M5 6l7-5 7 5" stroke="#f07a3c" strokeWidth="2.400" />
        </Icon>
        智能排版
        <Caret up className="-ml-px text-[#555]" />
      </button>
      <button aria-label="备注" className="ml-[102px] flex items-center gap-[5px]">
        <Icon className="size-[22px]">
          <path d="M1 3h22M1 9h22M1 15h22M1 21h12" />
          <path d="M15 19h9l-4.500 5z" fill="currentColor" stroke="none" />
        </Icon>
        <Caret />
      </button>
      <div className="ml-2 flex items-center gap-1">
        {viewIcons.map(({ label, art }, i) => (
          <button
            key={label}
            aria-label={label}
            className={clsx('flex h-[34px] w-8 items-center justify-center rounded-md', i === 0 && 'bg-[#bfc2bf]')}
          >
            <Icon className="size-[23px]">{art}</Icon>
          </button>
        ))}
      </div>
      <button aria-label="放映" className="ml-[24px] flex h-[34px] w-11 items-center justify-center rounded-md bg-[#fb7f4e]">
        <svg viewBox="0 0 12 18" className="h-[18px] w-3" aria-hidden="true">
          <path d="M0 0v18l12-9z" fill="#fff" />
        </svg>
      </button>
      <span className="ml-[6px] flex"><Caret /></span>
      <span className="relative ml-[27px] flex items-center">
        <select aria-label="缩放比例" className="w-12 appearance-none">
          <option>67%</option>
        </select>
        <span className="pointer-events-none absolute right-0 flex"><Caret /></span>
      </span>
      <button aria-label="缩小" className="ml-[15px]">
        <Icon className="size-[18px]" box="0 0 18 18"><path d="M1 9h16" strokeWidth="2.400" /></Icon>
      </button>
      <span className="relative mx-4 flex h-5 w-[193px] items-center">
        <span className="absolute top-1 left-24 h-3 w-px bg-[#aaa]" />
        <input
          type="range"
          aria-label="缩放"
          defaultValue={30}
          className="relative h-[2px] w-full appearance-none bg-linear-to-r from-[#777] from-30% to-[#bbb] to-30% [&::-webkit-slider-thumb]:size-[17px] [&::-webkit-slider-thumb]:appearance-none [&::-webkit-slider-thumb]:rounded-full [&::-webkit-slider-thumb]:border-2 [&::-webkit-slider-thumb]:border-[#555] [&::-webkit-slider-thumb]:bg-[#f3f6f3]"
        />
      </span>
      <button aria-label="放大">
        <Icon className="size-[18px]" box="0 0 18 18"><path d="M9 1v16M1 9h16" strokeWidth="2.400" /></Icon>
      </button>
      <button aria-label="适应窗口" className="mr-[22px] ml-[18px]">
        <Icon className="size-[18px]" box="0 0 18 18">
          <path d="M1 5V3a2 2 0 0 1 2-2h2M13 1h2a2 2 0 0 1 2 2v2M17 13v2a2 2 0 0 1-2 2h-2M5 17H3a2 2 0 0 1-2-2v-2M9 9v.1" strokeWidth="1.800" />
        </Icon>
      </button>
    </footer>
  );
}

/* ---------- danmaku over the video ---------- */

function Danmaku() {
  return (
    <div className="pointer-events-none absolute inset-x-0 top-0 z-20 h-14 overflow-hidden text-[31px] leading-9 font-medium whitespace-pre text-white/60 [text-shadow:0_0_2px_rgba(70,70,70,0.7)]">
      <span className="absolute top-[5px] left-[168px]">啥时候更新了，还得改吧</span>
      <span className="absolute top-[9px] left-[75%] flex items-center">
        <svg viewBox="0 0 30 32" className="mr-[6px] h-8 w-[30px]" aria-hidden="true">
          <path d="M0 14h6v16H3c-2 0-3-1-3-3z" fill="#c9994a" />
          <path d="M7 14c5-2 6-6 7-12 0-3 5-2 5 2 0 3-1 6-2 8h10c3 0 3 3 2 4 1 2 1 4-1 5 1 2 0 4-1 5 0 3-1 4-3 4H7z" fill="#eec77c" />
        </svg>
        你们急什么  都是懂哥？还学个吊
      </span>
    </div>
  );
}

export default function App() {
  return (
    <div className="relative flex h-screen flex-col overflow-hidden bg-black font-['Open_Sans','Noto_Sans_CJK_SC',sans-serif] text-[17px] leading-6 text-[#444]">
      <div className="h-7 shrink-0" />
      <TabBar />
      <div className="flex min-h-0 flex-1 flex-col bg-[#f2f5f2]">
        <MenuRow />
        <Ribbon />
        <Workspace />
        <StatusBar />
      </div>
      <div className="h-7 shrink-0 pr-4 text-right text-[14px] leading-5 text-[#b5b5b5]">CSDN @wang_book</div>
      <Danmaku />
    </div>
  );
}
